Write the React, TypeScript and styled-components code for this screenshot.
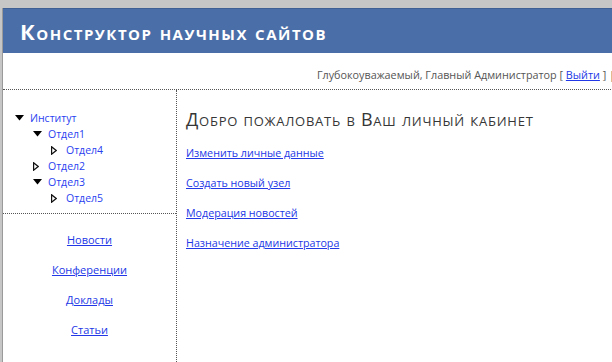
import styled, { createGlobalStyle } from "styled-components";

const GlobalStyle = createGlobalStyle`
    html, body {
        margin: 0;
        padding: 0;
        overflow: hidden;
        background: #c6c6c6;
    }
    body {
        font-family: "DejaVu Sans", "Liberation Sans", sans-serif;
    }
`

const Page = styled.div`
    margin: 8px 0 0 2px;
    width: 640px;
    height: 354px;
    background: #fff;
    border-left: 1px solid #9a9a9a;
    display: flex;
    flex-direction: column;
`

const Header = styled.div`
    height: 45px;
    background: #4a6ea8;
    border-top: 1px solid #3d5f94;
    box-sizing: border-box;
    display: flex;
    align-items: center;
    padding-left: 17px;
`

const Title = styled.h1`
    margin: 0;
    color: #fff;
    font-family: "Open Sans", "DejaVu Sans", sans-serif;
    font-weight: 700;
    font-size: 22px;
    font-variant: small-caps;
    letter-spacing: 1.5px;
`

const UserBar = styled.div`
    height: 37px;
    box-sizing: border-box;
    padding: 14px 28px 0 0;
    text-align: right;
    font-family: "Open Sans", "DejaVu Sans", sans-serif;
    font-size: 10.8px;
    color: #555;
    border-bottom: 1px dotted #555;
`

const Link = styled.a`
    color: #2238e6;
    text-decoration: underline;
    cursor: pointer;
`

const Main = styled.div`
    flex: 1;
    display: grid;
    grid-template-columns: 174px 1fr;
`

const Sidebar = styled.div`
    border-right: 1px dotted #555;
    display: flex;
    flex-direction: column;
`

const Tree = styled.ul`
    list-style: none;
    margin: 0;
    padding: 20px 0 0 12px;
    height: 124px;
    box-sizing: border-box;
    border-bottom: 1px dotted #555;
`

const Node = styled.li<{ $level: number }>`
    display: flex;
    align-items: center;
    height: 16px;
    padding-left: ${p => p.$level * 18}px;
    font-family: "Open Sans", "DejaVu Sans", sans-serif;
    font-size: 10.5px;
    color: #2a3ff0;
`

const Arrow = styled.span`
    width: 15px;
    display: inline-flex;
    align-items: center;
`

const SideNav = styled.nav`
    display: flex;
    flex-direction: column;
    align-items: center;
    gap: 15px;
    padding-top: 18px;
    font-family: "Open Sans", "DejaVu Sans", sans-serif;
    font-size: 11px;
`

const Content = styled.div`
    padding: 17px 0 0 9px;
    display: flex;
    flex-direction: column;
    gap: 16px;
    font-family: "Open Sans", "DejaVu Sans", sans-serif;
    font-size: 10.7px;
`

const Heading = styled.h2`
    margin: 0 0 -1px;
    font-family: "Open Sans", "DejaVu Sans", sans-serif;
    font-weight: 400;
    font-size: 18px;
    letter-spacing: 0.75px;
    font-variant: small-caps;
    color: #363636;
`

const Expanded = () => (
    <svg width="9" height="6" viewBox="0 0 9 6">
        <path d="M0 0 H9 L4.5 5.5 Z" fill="#000" />
    </svg>
)

const Collapsed = () => (
    <svg width="6" height="9" viewBox="0 0 6 9">
        <path d="M0.6 0.8 L5.2 4.5 L0.6 8.2 Z" fill="#fff" stroke="#111" strokeWidth="1.2" />
    </svg>
)

const tree = [
    { name: "Институт", level: 0, open: true },
    { name: "Отдел1", level: 1, open: true },
    { name: "Отдел4", level: 2, open: false },
    { name: "Отдел2", level: 1, open: false },
    { name: "Отдел3", level: 1, open: true },
    { name: "Отдел5", level: 2, open: false },
]

const sections = ["Новости", "Конференции", "Доклады", "Статьи"]

const actions = [
    "Изменить личные данные",
    "Создать новый узел",
    "Модерация новостей",
    "Назначение администратора",
]

const App = () => {
    return (
        <>
            <GlobalStyle />
            <Page>
                <Header>
                    <Title>Конструктор научных сайтов</Title>
                </Header>
                <UserBar>
                    Глубокоуважаемый, Главный Администратор [ <Link>Выйти</Link> ] |
                </UserBar>
                <Main>
                    <Sidebar>
                        <Tree>
                            {tree.map(node =>
                                <Node key={node.name} $level={node.level}>
                                    <Arrow>{node.open ? <Expanded /> : <Collapsed />}</Arrow>
                                    {node.name}
                                </Node>)}
                        </Tree>
                        <SideNav>
                            {sections.map(s => <Link key={s}>{s}</Link>)}
                        </SideNav>
                    </Sidebar>
                    <Content>
                        <Heading>Добро пожаловать в Ваш личный кабинет</Heading>
                        {actions.map(a => <div key={a}><Link>{a}</Link></div>)}
                    </Content>
                </Main>
            </Page>
        </>
    )
}

export default App
